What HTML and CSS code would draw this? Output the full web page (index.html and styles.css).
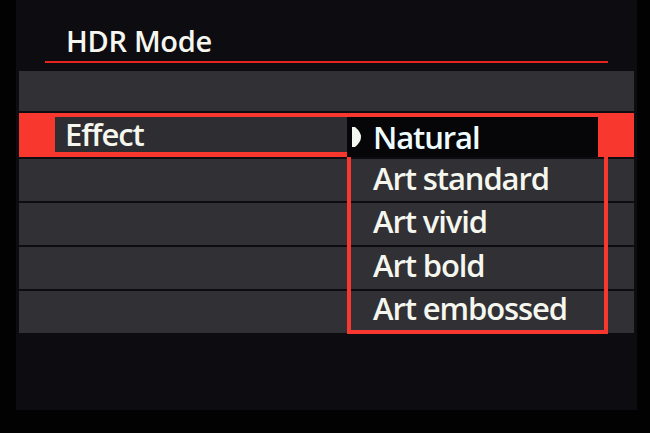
FILE: index.html
```html
<!DOCTYPE html>
<html lang="en">
<head>
<meta charset="utf-8">
<title>HDR Mode</title>
<link rel="stylesheet" href="styles.css">
</head>
<body>
<div class="screen">
  <header class="title-bar">
    <h1 class="title">HDR Mode</h1>
    <div class="title-rule"></div>
  </header>
  <div class="rows">
    <div class="row row-blank"></div>
    <div class="row row-selected"><div class="label">Effect</div></div>
    <div class="row"></div>
    <div class="row"></div>
    <div class="row"></div>
    <div class="row"></div>
  </div>
  <ul class="dropdown">
    <li class="option current"><svg class="pointer" viewBox="0 0 9 20" width="9" height="20"><path d="M0 0 L3 0 Q9 5 9 10 Q9 15 3 20 L0 20 Z" fill="#f4f6f0"/></svg>Natural</li>
    <li class="option">Art standard</li>
    <li class="option">Art vivid</li>
    <li class="option">Art bold</li>
    <li class="option">Art embossed</li>
  </ul>
</div>
</body>
</html>
```
FILE: styles.css
```css
html, body {
  margin: 0;
  padding: 0;
}
body {
  width: 650px;
  height: 433px;
  overflow: hidden;
  background: #020203;
  font-family: "Open Sans", "Noto Sans", sans-serif;
  color: #f5f6ee;
}
.screen {
  position: relative;
  margin-left: 16px;
  width: 621px;
  height: 410px;
  background: #0c0c11;
}
.title-bar {
  padding: 20px 0 8px 0;
}
.title {
  margin: 0 0 0 50px;
  font-size: 29px;
  font-weight: 600;
  line-height: 41px;
  letter-spacing: -0.3px;
}
.title-rule {
  margin-left: 29px;
  width: 563px;
  height: 2px;
  background: #e6231f;
}
.rows {
  display: flex;
  flex-direction: column;
  gap: 2px;
  padding: 0 3px;
}
.row {
  height: 42px;
  background: #303035;
}
.row-blank {
  height: 40px;
}
.row-selected {
  height: 44px;
  box-sizing: border-box;
  display: flex;
  align-items: flex-start;
  padding: 4px 0 0 36px;
  background: #f8372f;
}
.label {
  width: 292px;
  height: 35px;
  box-sizing: border-box;
  padding-left: 10px;
  background: #2d2d32;
  font-size: 31px;
  font-weight: 600;
  line-height: 35px;
  letter-spacing: -1.1px;
}
.dropdown {
  position: absolute;
  left: 331px;
  top: 113px;
  width: 261px;
  height: 221px;
  box-sizing: border-box;
  margin: 0;
  padding: 0;
  list-style: none;
  border: 4px solid #f8372f;
  display: flex;
  flex-direction: column;
}
.option {
  position: relative;
  height: 43.25px;
  padding-left: 22px;
  font-size: 31px;
  font-weight: 600;
  line-height: 43.25px;
  letter-spacing: -1.1px;
  white-space: nowrap;
}
.option.current {
  height: 40px;
  line-height: 40px;
  margin: 0 6px 0 -4px;
  padding-left: 26px;
  background: #060608;
  color: #eefbff;
}
.pointer {
  position: absolute;
  left: 5px;
  top: 10px;
}
```
